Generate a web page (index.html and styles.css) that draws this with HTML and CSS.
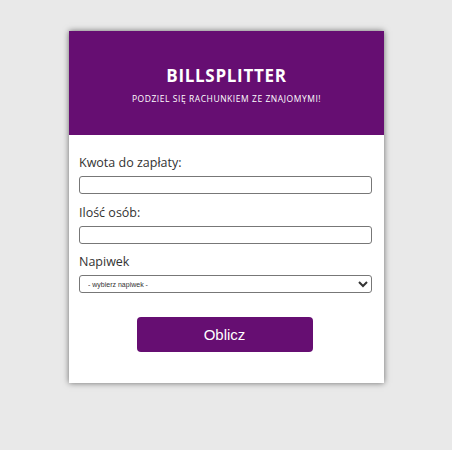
FILE: index.html
```html
<!DOCTYPE html>
<html lang="pl">
<head>
<meta charset="utf-8">
<link rel="stylesheet" href="styles.css">
</head>
<body>
<div class="card">
  <header class="header">
    <h1 class="title">BILLSPLITTER</h1>
    <p class="subtitle">PODZIEL SIĘ RACHUNKIEM ZE ZNAJOMYMI!</p>
  </header>
  <form class="form">
    <label class="label">Kwota do zapłaty:</label>
    <input class="input" type="text">
    <label class="label">Ilość osób:</label>
    <input class="input" type="text">
    <label class="label">Napiwek</label>
    <select class="select"><option>- wybierz napiwek -</option></select>
    <div class="actions"><button class="btn" type="button">Oblicz</button></div>
  </form>
</div>
</body>
</html>
```
FILE: styles.css
```css
html, body { margin: 0; padding: 0; }
body {
  background: #e9e9e9;
  font-family: "Open Sans", "DejaVu Sans", sans-serif;
  width: 452px;
  height: 450px;
}
.card {
  margin: 31px 0 0 69px;
  width: 315px;
  height: 352px;
  background: #fff;
  box-shadow: 0 0 6px rgba(0,0,0,0.55);
}
.header {
  background: #660e72;
  height: 104px;
  color: #fff;
  text-align: center;
  box-sizing: border-box;
  padding-top: 34px;
}
.title {
  margin: 0;
  font-size: 17px;
  font-weight: 700;
  line-height: 22px;
  letter-spacing: 0.7px;
}
.subtitle {
  margin: 6px 0 0;
  font-size: 8.5px;
  line-height: 12px;
  letter-spacing: 0.55px;
}
.form {
  padding: 20px 12px 0 10px;
  display: flex;
  flex-direction: column;
}
.label {
  font-size: 12.5px;
  color: #333;
  line-height: 16px;
  margin-bottom: 5px;
}
.input {
  box-sizing: border-box;
  width: 293px;
  height: 18px;
  border: 1px solid #777;
  border-radius: 3px;
  margin: 0 0 11px;
  padding: 0 4px;
  font-size: 11px;
}
.input + .label + .input { margin-bottom: 10px; }
.select {
  box-sizing: border-box;
  width: 293px;
  height: 18px;
  border: 1px solid #777;
  border-radius: 3px;
  margin: 0;
  padding: 0 4px;
  font-family: "Liberation Sans", Arial, sans-serif;
  font-size: 7px;
  color: #333;
  background: #fff;
}
.actions {
  display: flex;
  justify-content: center;
  padding-top: 24px;
  padding-right: 2px;
}
.btn {
  width: 176px;
  height: 35px;
  border: 0;
  border-radius: 4px;
  background: #660e72;
  color: #fff;
  font-family: "Liberation Sans", Arial, sans-serif;
  font-size: 15px;
}
```
